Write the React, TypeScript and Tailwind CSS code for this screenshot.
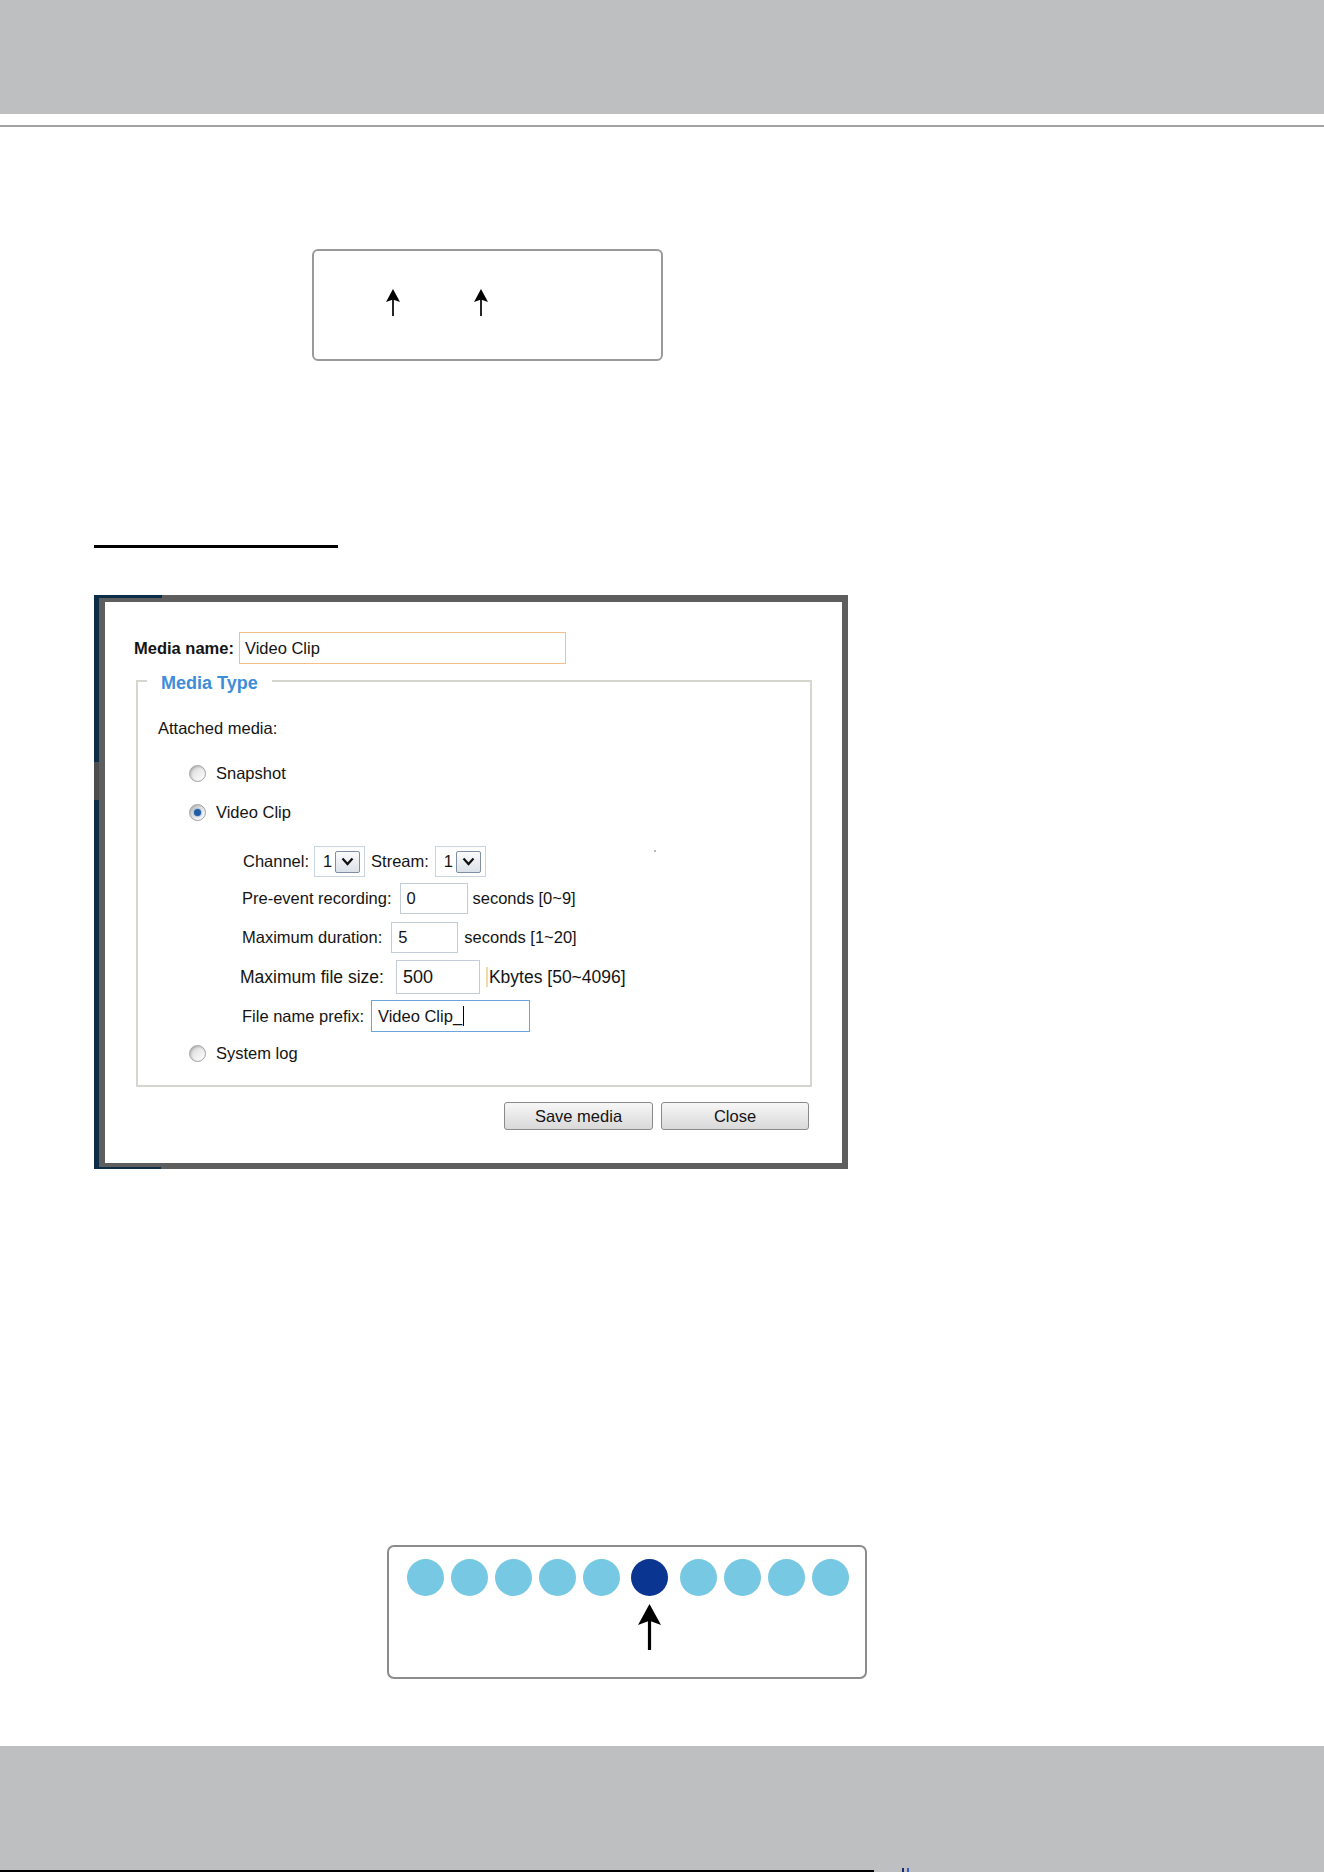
import React from "react";

type ArrowProps = { width: number; height: number; head: number; stroke: number };

const UpArrow = ({ width, height, head, stroke }: ArrowProps) => (
  <svg width={width} height={height} viewBox={`0 0 ${width} ${height}`} className="block">
    <line x1={width / 2} y1={head * 0.6} x2={width / 2} y2={height} stroke="#000" strokeWidth={stroke} />
    <path d={`M${width / 2} 0 L${width} ${head} L${width / 2} ${head * 0.8} L0 ${head} Z`} fill="#000" />
  </svg>
);

const Radio = ({ checked }: { checked?: boolean }) => (
  <span className="flex h-[17px] w-[17px] items-center justify-center rounded-full border border-[#a3a3a3] bg-linear-to-br from-[#d2d2d2] via-[#ececec] to-white shadow-[inset_1px_1px_2px_rgba(0,0,0,0.2)]">
    {checked && <span className="h-[7px] w-[7px] rounded-full bg-[#1f5ea6] shadow-[0_0_2px_1px_rgba(60,120,190,0.45)]" />}
  </span>
);

const Select = () => (
  <div className="flex h-[31px] w-[51px] items-center border border-[#c9d5e2] bg-white pl-[8px] text-[16.5px]">
    <span>1</span>
    <span className="ml-auto mr-[4px] flex h-[22px] w-[25px] items-center justify-center rounded-[2px] border border-[#7f8ea2] bg-linear-to-b from-[#fbfbfb] to-[#dce2e9]">
      <svg width="13" height="9" viewBox="0 0 13 9">
        <path d="M1.5 1.5 L6.5 7 L11.5 1.5" fill="none" stroke="#111" strokeWidth="2.2" />
      </svg>
    </span>
  </div>
);

const Field = ({ width, height = 31, value, size = "text-[16.5px]" }: { width: string; height?: number; value: string; size?: string }) => (
  <div className={`flex items-center border border-[#c3cdd8] pl-[6px] ${width} ${size}`} style={{ height }}>
    {value}
  </div>
);

const Dot = ({ dark }: { dark?: boolean }) => (
  <span className={`block h-[37px] w-[37px] rounded-full ${dark ? "bg-[#0a3590]" : "bg-[#77c8e3]"}`} />
);

export default function App() {
  return (
    <div className="flex h-[1872px] w-[1324px] flex-col overflow-hidden bg-white font-['Liberation_Sans',Arial,sans-serif] text-[#141414]">
      <div className="h-[114px] shrink-0 bg-[#bebfc1]" />
      <div className="mt-[11px] h-[2px] shrink-0 bg-[#a3a3a3]" />

      {/* first diagram */}
      <div className="ml-[312px] mt-[122px] h-[112px] w-[351px] shrink-0 rounded-[6px] border-2 border-[#9a9a9a]">
        <div className="flex gap-[74px] pl-[72px] pt-[38px]">
          <UpArrow width={14} height={27} head={13} stroke={1.7} />
          <UpArrow width={14} height={27} head={13} stroke={1.7} />
        </div>
      </div>

      <div className="ml-[94px] mt-[184px] h-[3px] w-[244px] shrink-0 bg-black" />

      {/* dialog screenshot */}
      <div className="relative ml-[94px] mt-[47px] h-[574px] w-[754px] shrink-0 border-l-[5px] border-[#0c2d47] bg-[#5e5e5e] pb-[6px] pl-[6px] pr-[6px] pt-[7px]">
        <span className="absolute -left-[5px] top-0 h-[3px] w-[68px] bg-[#0c2d47]" />
        <span className="absolute -left-[5px] bottom-0 h-[2px] w-[67px] bg-[#0c2d47]" />
        <span className="absolute -left-[5px] top-[167px] h-[38px] w-[5px] bg-[#4d4d4d]" />

        <div className="flex h-full flex-col bg-white pl-[29px] pt-[30px]">
          <div className="flex h-[32px] items-center">
            <span className="text-[16.5px] font-bold">Media name:</span>
            <div className="ml-[5px] flex h-[32px] w-[327px] items-center border border-[#f6bf8a] pl-[5px] text-[16.5px]">Video Clip</div>
          </div>

          <div className="relative ml-[2px] mt-[16px] h-[407px] w-[676px] border-2 border-[#d6d6ce] pl-[20px] pt-[36px] text-[16.5px]">
            <span className="absolute -top-[9px] left-[9px] bg-white px-[14px] text-[18px] font-bold leading-[21px] text-[#3d8ed8]">
              Media Type
            </span>
            <span className="absolute left-[516px] top-[168px] h-[2px] w-[2px] bg-[#b8b8b8]" />

            <div className="h-[20px] leading-[20px]">Attached media:</div>

            <div className="mt-[25px] flex h-[20px] items-center pl-[31px]">
              <Radio />
              <span className="ml-[10px]">Snapshot</span>
            </div>
            <div className="mt-[19px] flex h-[20px] items-center pl-[31px]">
              <Radio checked />
              <span className="ml-[10px]">Video Clip</span>
            </div>

            <div className="mt-[24px] flex h-[31px] items-center pl-[85px]">
              <span>Channel:</span>
              <span className="ml-[5px]"><Select /></span>
              <span className="ml-[6px]">Stream:</span>
              <span className="ml-[6px]"><Select /></span>
            </div>
            <div className="mt-[6px] flex h-[31px] items-center pl-[84px]">
              <span>Pre-event recording:</span>
              <span className="ml-[8px]"><Field width="w-[68px]" value="0" /></span>
              <span className="ml-[5px]">seconds [0~9]</span>
            </div>
            <div className="mt-[8px] flex h-[31px] items-center pl-[84px]">
              <span>Maximum duration:</span>
              <span className="ml-[9px]"><Field width="w-[67px]" value="5" /></span>
              <span className="ml-[6px]">seconds [1~20]</span>
            </div>
            <div className="mt-[7px] flex h-[34px] items-center pl-[82px] text-[17.5px]">
              <span>Maximum file size:</span>
              <span className="ml-[12px]"><Field width="w-[84px]" height={34} value="500" size="text-[18px]" /></span>
              <span className="ml-[6px] border-l-2 border-[#f3d9a8] pl-[1px] leading-[20px]">Kbytes [50~4096]</span>
            </div>
            <div className="mt-[6px] flex h-[32px] items-center pl-[84px]">
              <span>File name prefix:</span>
              <span className="ml-[7px]">
                <div className="flex h-[32px] w-[159px] items-center border border-[#6ea6dc] pl-[6px]">
                  Video Clip_<span className="ml-[1px] h-[20px] w-[1px] bg-black" />
                </div>
              </span>
            </div>

            <div className="mt-[11px] flex h-[20px] items-center pl-[31px]">
              <Radio />
              <span className="ml-[10px]">System log</span>
            </div>
          </div>

          <div className="ml-[2px] mt-[15px] flex w-[676px] justify-end gap-[8px] pr-[3px]">
            <button className="h-[28px] w-[149px] rounded-[3px] border border-[#8a8a8a] bg-linear-to-b from-[#f7f7f7] to-[#d9d9d9] text-[16.5px] text-[#141414]">
              Save media
            </button>
            <button className="h-[28px] w-[148px] rounded-[3px] border border-[#8a8a8a] bg-linear-to-b from-[#f7f7f7] to-[#d9d9d9] text-[16.5px] text-[#141414]">
              Close
            </button>
          </div>
        </div>
      </div>

      {/* second diagram */}
      <div className="ml-[387px] mt-[376px] h-[134px] w-[480px] shrink-0 rounded-[7px] border-2 border-[#8c8c8c] pl-[18px] pt-[12px]">
        <div className="flex items-start">
          <Dot />
          <span className="ml-[7px]"><Dot /></span>
          <span className="ml-[7px]"><Dot /></span>
          <span className="ml-[7px]"><Dot /></span>
          <span className="ml-[7px]"><Dot /></span>
          <div className="ml-[11px] flex flex-col items-center">
            <Dot dark />
            <div className="mt-[8px]">
              <UpArrow width={23} height={46} head={21} stroke={3.2} />
            </div>
          </div>
          <span className="ml-[12px]"><Dot /></span>
          <span className="ml-[7px]"><Dot /></span>
          <span className="ml-[7px]"><Dot /></span>
          <span className="ml-[7px]"><Dot /></span>
        </div>
      </div>

      {/* footer */}
      <div className="mt-[67px] flex h-[126px] shrink-0 items-end bg-[#bebfc1]">
        <div className="h-[2px] w-[874px] bg-black" />
        <div className="ml-[28px] flex items-end gap-[3px]">
          <span className="h-[4px] w-[2px] bg-[#1b2a6b]" />
          <span className="h-[4px] w-[2px] bg-[#3a5bc0]" />
        </div>
      </div>
    </div>
  );
}
